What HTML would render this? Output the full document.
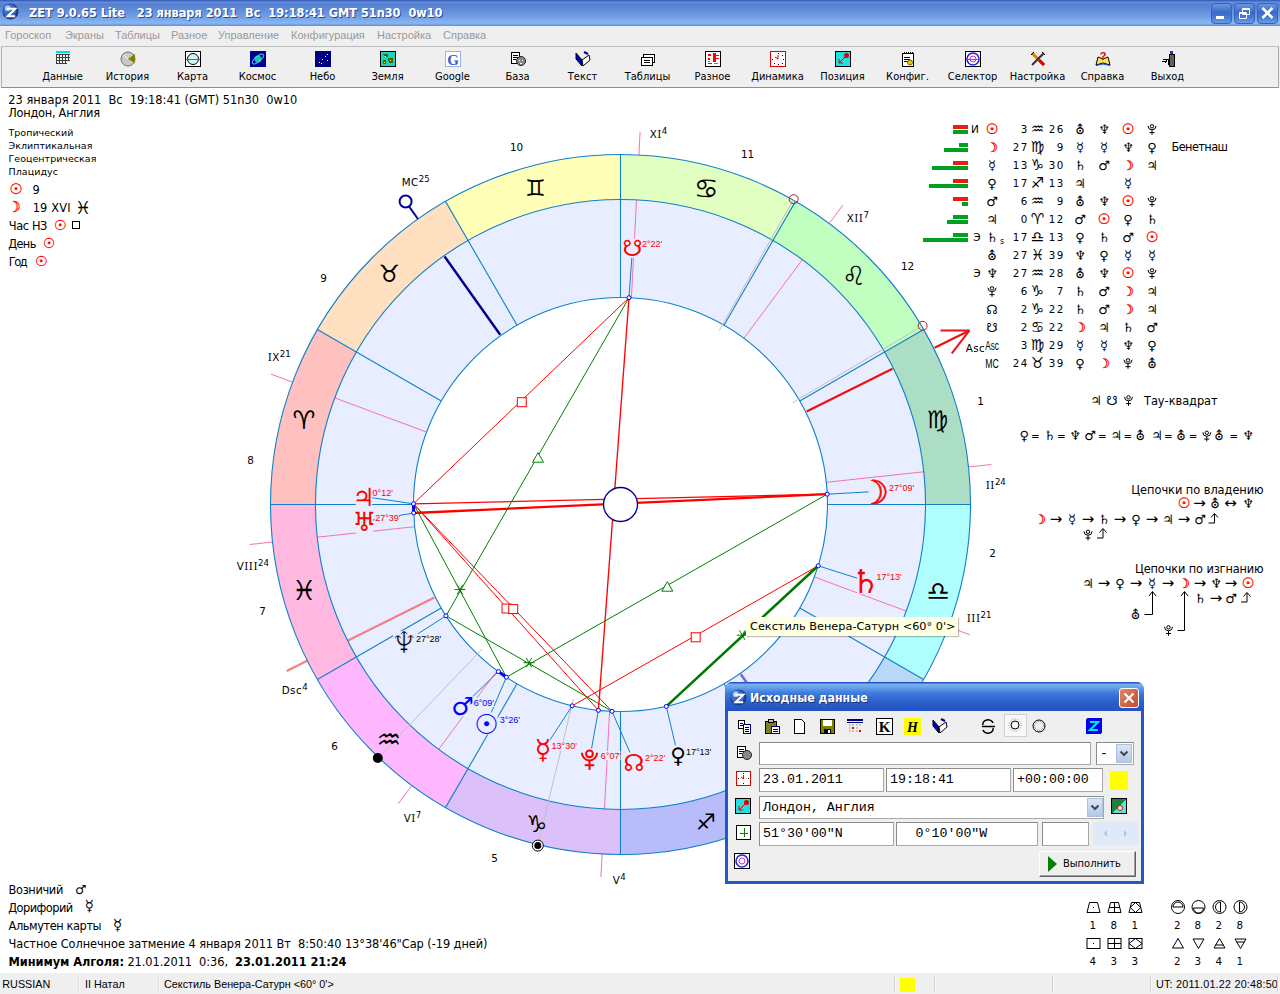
<!DOCTYPE html><html lang="ru"><head><meta charset="utf-8"><title>ZET 9.0.65 Lite</title><style>
html,body{margin:0;padding:0}
body{width:1280px;height:994px;overflow:hidden;background:#fff;position:relative;font-family:"DejaVu Sans","Liberation Sans",sans-serif;font-size:11.4px;color:#000}
.abs{position:absolute;white-space:pre}
#title{position:absolute;left:0;top:0;width:1280px;height:26px;background:linear-gradient(#3a62be 0,#3a62be 1px,#6a92e0 2px,#5580d2 4px,#5e8ad8 9px,#6e9ce4 16px,#8ab6f0 23px,#7eaaea 24px,#5c8ee0 26px)}
#title .t{position:absolute;left:29px;top:5px;color:#fff;font:bold 12.6px "DejaVu Sans Condensed","Liberation Sans",sans-serif;white-space:pre;text-shadow:1px 1px 0 #2a4a90}
.wb{position:absolute;top:3px;width:21px;height:21px;border:1px solid #3c60b4;border-radius:4px;box-sizing:border-box;background:linear-gradient(#6c96e2,#3a6ac8 45%,#4a7ad2 70%,#6a9ae4)}
#menu{position:absolute;left:0;top:26px;width:1280px;height:19px;background:#efefef}
#menu span{position:absolute;top:3px;color:#9a9a9a;font:11px "Liberation Sans",sans-serif;white-space:pre}
#tb{position:absolute;left:1px;top:46px;width:1276px;height:40px;background:#efefef;border:1px solid #a8a8a8;border-top-color:#bcbcbc;border-left-color:#b4b4b4;border-bottom-color:#8e8e8e}
#tbbg{position:absolute;left:0;top:45px;width:1280px;height:43px;background:#efefef}
.tl{position:absolute;top:70px;width:80px;margin-left:-40px;text-align:center;font:11px "DejaVu Sans Condensed","Liberation Sans",sans-serif;white-space:pre}
svg text{white-space:pre}
.pg{font:24px "DejaVu Sans",sans-serif;text-anchor:middle;dominant-baseline:central}
.pl{font:9px "Liberation Sans",sans-serif}
.sg{font:24px "DejaVu Sans",sans-serif;text-anchor:middle;dominant-baseline:central}
.hn{font:10.4px "DejaVu Sans",sans-serif;text-anchor:middle}
.cl{font:10.3px "DejaVu Sans",sans-serif;letter-spacing:0.5px}
.rs{font-family:"DejaVu Serif",serif;font-size:10.4px}
.tg{font:13px "DejaVu Sans",sans-serif;text-anchor:middle}
.ts{font:15px "DejaVu Sans",sans-serif}
.tt{font:10.3px "DejaVu Sans",sans-serif;letter-spacing:1.4px}
.tn{font:12px "Liberation Sans",sans-serif}
.tf{font:10.5px "DejaVu Sans",sans-serif}
.bt{font:11.4px "DejaVu Sans",sans-serif}
.ar{font:15px "DejaVu Sans",sans-serif}
.sm{font:9.5px "DejaVu Sans",sans-serif;letter-spacing:0.1px}
#status{position:absolute;left:0;top:973px;width:1280px;height:21px;background:#efefef}
#status span{position:absolute;top:5px;font:10.8px "Liberation Sans",sans-serif;white-space:pre}
#status i{position:absolute;top:3px;width:1px;height:16px;background:#d2d2d2;border-right:1px solid #fafafa}
#tip{position:absolute;left:745.5px;top:617px;width:212px;height:18.5px;background:#ffffe1;box-sizing:border-box;font:11.3px "DejaVu Sans",sans-serif;line-height:20px;padding-left:4.5px;white-space:pre;box-shadow:1px 1px 1px rgba(0,0,0,.25)}
#dlg{position:absolute;left:725px;top:682px;width:419px;height:202px;box-sizing:border-box;background:#2458c8;border-radius:8px 8px 0 0}
#dlg .ttl{position:absolute;left:0;top:0;width:100%;height:29px;border-radius:7px 7px 0 0;background:linear-gradient(#2454c4 0,#2454c4 1px,#7cb2f0 2px,#6aa4ec 5px,#3f7cdc 11px,#2c62cc 19px,#2352c0 29px)}
#dlg .ttl b{position:absolute;left:25px;top:8.5px;color:#fff;font:bold 12.3px "DejaVu Sans Condensed","Liberation Sans",sans-serif;white-space:pre;text-shadow:1px 1px 0 #183878}
#dlg .body{position:absolute;left:3px;top:29px;width:413px;height:170px;background:#efefef}
.inp{position:absolute;box-sizing:border-box;background:#fff;border:1px solid #a8a8a8;border-top-color:#8c8c8c;border-left-color:#8c8c8c;font:13.3px "Liberation Mono",monospace;line-height:22px;padding-left:3px;white-space:pre;overflow:hidden}
</style></head><body>
<div id="title"><svg class="abs" style="left:2px;top:3px" width="17" height="17" viewBox="0 0 18 18"><circle cx="9" cy="9" r="8.5" fill="#1c3c88"/><circle cx="8" cy="8" r="7" fill="#3e6cc8"/><circle cx="6" cy="5.5" r="3" fill="#a8c8f8"/><path d="M5 6H14L6 14H14" fill="none" stroke="#fff" stroke-width="2.2"/></svg><span class="t">ZET 9.0.65 Lite   23 января 2011  Вс  19:18:41 GMT 51n30  0w10</span><div class="wb" style="left:1211px"><svg width="19" height="19"><rect x="4" y="12" width="8" height="3" fill="#fff"/></svg></div><div class="wb" style="left:1234px"><svg width="19" height="19"><path d="M7.5 4.5h7v6h-7zM7.5 5.5h7M4.5 8.5h7v6h-7zM4.5 9.5h7" fill="none" stroke="#fff" stroke-width="1"/></svg></div><div class="wb" style="left:1257px"><svg width="19" height="19"><path d="M4.5 4L14.5 14M14.5 4L4.5 14" stroke="#fff" stroke-width="2.6"/></svg></div></div>
<div id="menu"><span style="left:5px">Гороскоп</span><span style="left:65px">Экраны</span><span style="left:115px">Таблицы</span><span style="left:171px">Разное</span><span style="left:218px">Управление</span><span style="left:291px">Конфигурация</span><span style="left:377px">Настройка</span><span style="left:443px">Справка</span></div>
<div id="tbbg"></div><div id="tb"></div>
<div class="tl" style="left:62.5px">Данные</div>
<div class="tl" style="left:127.5px">История</div>
<div class="tl" style="left:192.5px">Карта</div>
<div class="tl" style="left:257.5px">Космос</div>
<div class="tl" style="left:322.5px">Небо</div>
<div class="tl" style="left:387.5px">Земля</div>
<div class="tl" style="left:452.5px">Google</div>
<div class="tl" style="left:517.5px">База</div>
<div class="tl" style="left:582.5px">Текст</div>
<div class="tl" style="left:647.5px">Таблицы</div>
<div class="tl" style="left:712.5px">Разное</div>
<div class="tl" style="left:777.5px">Динамика</div>
<div class="tl" style="left:842.5px">Позиция</div>
<div class="tl" style="left:907.5px">Конфиг.</div>
<div class="tl" style="left:972.5px">Селектор</div>
<div class="tl" style="left:1037.5px">Настройка</div>
<div class="tl" style="left:1102.5px">Справка</div>
<div class="tl" style="left:1167.5px">Выход</div>
<svg class="abs" style="left:0;top:0" width="1280" height="994" viewBox="0 0 1280 994"><g transform="translate(55,51)" shape-rendering="crispEdges"><rect x="1" y="0" width="14" height="2" fill="#00e0e0"/><path d="M1 3H15M1 6H15M1 9H15M1 12H12M1 3V13M4 3V13M7 3V13M10 3V13M13 3V10" stroke="#404040" fill="none"/></g>
<g transform="translate(120,51)" shape-rendering="crispEdges"><circle cx="8" cy="8" r="7" fill="#c8c8c8" stroke="#707070" shape-rendering="auto"/><path d="M8 8L15 3V12Z" fill="#808000" shape-rendering="auto"/><path d="M8 8L4 4" stroke="#fff" shape-rendering="auto"/></g>
<g transform="translate(185,51)" shape-rendering="crispEdges"><rect x="0.5" y="0.5" width="15" height="15" fill="#fff" stroke="#000"/><circle cx="8" cy="8" r="5.5" fill="#d0f8f8" stroke="#000" shape-rendering="auto"/><path d="M1 8H15" stroke="#f0f" /></g>
<g transform="translate(250,51)" shape-rendering="crispEdges"><rect width="16" height="16" fill="#000090"/><circle cx="8" cy="8" r="3.5" fill="#20c0a0" shape-rendering="auto"/><ellipse cx="8" cy="8" rx="7" ry="2.5" fill="none" stroke="#40d0ff" transform="rotate(-40 8 8)" shape-rendering="auto"/></g>
<g transform="translate(315,51)" shape-rendering="crispEdges"><rect width="16" height="16" fill="#000080"/><path d="M4 11h1M7 8h1M10 5h1M12 3h1M6 12h1M12 9h1" stroke="#fff"/></g>
<g transform="translate(380,51)" shape-rendering="crispEdges"><rect x="0.5" y="0.5" width="15" height="15" fill="#20d0c0" stroke="#000"/><path d="M3 3h5v3h-3zM8 7h5v5h-4zM3 9h3v4h-3z" fill="#207020"/><path d="M5 5h1M10 9h1M4 11h1" stroke="#ff0"/></g>
<g transform="translate(445,51)" shape-rendering="crispEdges"><rect x="0.5" y="0.5" width="15" height="15" fill="#fff" stroke="#a0b0e0"/><text x="8" y="13.5" text-anchor="middle" style="font:bold 15px 'Liberation Serif',serif" fill="#3060d0" shape-rendering="auto">G</text></g>
<g transform="translate(510,51)" shape-rendering="crispEdges"><path d="M1.5 1.5h8v11h-8z" fill="#fff" stroke="#000"/><path d="M3 4h5M3 6h5M3 8h3" stroke="#000"/><circle cx="11" cy="10" r="4.5" fill="#888" stroke="#222" shape-rendering="auto"/><path d="M9 9h1M12 9h1M10 12h2" stroke="#fff"/></g>
<g transform="translate(575,51)" shape-rendering="crispEdges"><path d="M1 2L7 9V15L1 8Z" fill="#0000c0" stroke="#000" shape-rendering="auto"/><path d="M7 9L14 4L15 9L8 15Z" fill="#fff" stroke="#000" shape-rendering="auto"/><path d="M9 1l4 2" stroke="#000080" stroke-width="2" shape-rendering="auto"/></g>
<g transform="translate(640,51)" shape-rendering="crispEdges"><path d="M3.5 3.5h11v8h-11z" fill="#fff" stroke="#000"/><path d="M1.5 6.5h11v8h-11z" fill="#fff" stroke="#000"/><path d="M4 9h6M4 11h6" stroke="#000"/></g>
<g transform="translate(705,51)" shape-rendering="crispEdges"><rect x="0.5" y="0.5" width="15" height="15" fill="#fff" stroke="#000"/><path d="M3 3h3v2h-3zM3 7h2v2h-2z" fill="#f00"/><path d="M8 2h2v8h-2zM11 4h3M11 7h3M3 12h4" stroke="#f00" fill="#f00"/><path d="M9 12h4M3 10h2" stroke="#0c0"/></g>
<g transform="translate(770,51)" shape-rendering="crispEdges"><rect x="0.5" y="0.5" width="15" height="15" fill="#fff" stroke="#e00000"/><path d="M8 8V4M8 8L5 6" stroke="#e00000" shape-rendering="auto"/><path d="M8 2h1M8 13h1M2 8h1M13 8h1M12 4h1M12 12h1M4 12h1" stroke="#000"/></g>
<g transform="translate(835,51)" shape-rendering="crispEdges"><rect x="0.5" y="0.5" width="15" height="15" fill="#20e0e0" stroke="#000"/><circle cx="11.5" cy="4.5" r="2.5" fill="#e00000" shape-rendering="auto"/><path d="M10 6L4 12M4 8V12H8" stroke="#e00000" fill="none" shape-rendering="auto"/></g>
<g transform="translate(900,51)" shape-rendering="crispEdges"><path d="M2.5 2.5h11v13h-11z" fill="#fff" stroke="#000"/><path d="M4 1v2M6 1v2M8 1v2M10 1v2M12 1v2" stroke="#000"/><path d="M4 6h6M4 8h6M4 10h4" stroke="#000"/><circle cx="10" cy="11.5" r="2.5" fill="#e0d000" stroke="#806000" shape-rendering="auto"/></g>
<g transform="translate(965,51)" shape-rendering="crispEdges"><rect x="0.5" y="0.5" width="15" height="15" fill="#fff" stroke="#000"/><circle cx="8" cy="8" r="6" fill="none" stroke="#2020e0" stroke-width="1.5" shape-rendering="auto"/><circle cx="8" cy="8" r="3" fill="none" stroke="#e020e0" shape-rendering="auto"/><path d="M1 8H15" stroke="#e020e0"/></g>
<g transform="translate(1030,51)" shape-rendering="crispEdges"><path d="M2 2L14 14" stroke="#e08000" stroke-width="3" shape-rendering="auto"/><path d="M14 2L2 14" stroke="#303030" stroke-width="2" shape-rendering="auto"/><path d="M9 9L14 14" stroke="#e00000" stroke-width="3" shape-rendering="auto"/><path d="M1 4l3-3M15 4l-3-3" stroke="#000" shape-rendering="auto"/></g>
<g transform="translate(1095,51)" shape-rendering="crispEdges"><path d="M1 14L3 6L8 8L13 6L15 14L8 12Z" fill="#ffe060" stroke="#000" shape-rendering="auto"/><path d="M1 14.5L8 13L15 14.5" stroke="#2040e0" fill="none" shape-rendering="auto"/><text x="8" y="9" text-anchor="middle" style="font:bold 11px 'Liberation Sans',sans-serif" fill="#e00000" shape-rendering="auto">?</text></g>
<g transform="translate(1160,51)" shape-rendering="crispEdges"><rect x="9" y="3" width="5" height="12" fill="#606060" stroke="#000"/><rect x="10" y="0" width="3" height="3" fill="#3030c0"/><path d="M3 8h5M2 10h3M5 12l3-4l1 6" stroke="#000" fill="none"/></g>
<circle cx="620.5" cy="504.5" r="350" fill="#e8eeff"/>
<line x1="631.4" y1="297.8" x2="640.1" y2="132.0" stroke="#f870b0" stroke-width="1" />
<line x1="743.9" y1="338.3" x2="842.9" y2="205.1" stroke="#f870b0" stroke-width="1" />
<line x1="826.3" y1="482.3" x2="991.3" y2="464.5" stroke="#f870b0" stroke-width="1" />
<line x1="814.4" y1="576.9" x2="970.0" y2="634.9" stroke="#f870b0" stroke-width="1" />
<line x1="609.6" y1="711.2" x2="600.9" y2="877.0" stroke="#f870b0" stroke-width="1" />
<line x1="497.1" y1="670.7" x2="398.1" y2="803.9" stroke="#f870b0" stroke-width="1" />
<line x1="414.7" y1="526.7" x2="249.7" y2="544.5" stroke="#f870b0" stroke-width="1" />
<line x1="426.6" y1="432.1" x2="271.0" y2="374.1" stroke="#f870b0" stroke-width="1" />
<line x1="434.4" y1="597.4" x2="286.7" y2="671.0" stroke="#f48080" stroke-width="2.2" />
<path d="M270.5 504.5 A350 350 0 0 1 317.4 329.5 L356.4 352.0 A305 305 0 0 0 315.5 504.5 Z" fill="#ffc0c0"/>
<path d="M317.4 329.5 A350 350 0 0 1 445.5 201.4 L468.0 240.4 A305 305 0 0 0 356.4 352.0 Z" fill="#ffe0c0"/>
<path d="M445.5 201.4 A350 350 0 0 1 620.5 154.5 L620.5 199.5 A305 305 0 0 0 468.0 240.4 Z" fill="#ffffb8"/>
<path d="M620.5 154.5 A350 350 0 0 1 795.5 201.4 L773.0 240.4 A305 305 0 0 0 620.5 199.5 Z" fill="#e0ffc0"/>
<path d="M795.5 201.4 A350 350 0 0 1 923.6 329.5 L884.6 352.0 A305 305 0 0 0 773.0 240.4 Z" fill="#c0ffc0"/>
<path d="M923.6 329.5 A350 350 0 0 1 970.5 504.5 L925.5 504.5 A305 305 0 0 0 884.6 352.0 Z" fill="#acdec6"/>
<path d="M970.5 504.5 A350 350 0 0 1 923.6 679.5 L884.6 657.0 A305 305 0 0 0 925.5 504.5 Z" fill="#b0ffff"/>
<path d="M923.6 679.5 A350 350 0 0 1 795.5 807.6 L773.0 768.6 A305 305 0 0 0 884.6 657.0 Z" fill="#b8d8f8"/>
<path d="M795.5 807.6 A350 350 0 0 1 620.5 854.5 L620.5 809.5 A305 305 0 0 0 773.0 768.6 Z" fill="#b8bcfa"/>
<path d="M620.5 854.5 A350 350 0 0 1 445.5 807.6 L468.0 768.6 A305 305 0 0 0 620.5 809.5 Z" fill="#dcc0fa"/>
<path d="M445.5 807.6 A350 350 0 0 1 317.4 679.5 L356.4 657.0 A305 305 0 0 0 468.0 768.6 Z" fill="#ffb8ff"/>
<path d="M317.4 679.5 A350 350 0 0 1 270.5 504.5 L315.5 504.5 A305 305 0 0 0 356.4 657.0 Z" fill="#ffb8e0"/>
<circle cx="620.5" cy="504.5" r="207" fill="#fff"/>
<line x1="413.5" y1="504.5" x2="270.5" y2="504.5" stroke="#1080c8" stroke-width="1.1" />
<line x1="441.2" y1="401.0" x2="317.4" y2="329.5" stroke="#1080c8" stroke-width="1.1" />
<line x1="517.0" y1="325.2" x2="445.5" y2="201.4" stroke="#1080c8" stroke-width="1.1" />
<line x1="620.5" y1="297.5" x2="620.5" y2="154.5" stroke="#1080c8" stroke-width="1.1" />
<line x1="724.0" y1="325.2" x2="795.5" y2="201.4" stroke="#1080c8" stroke-width="1.1" />
<line x1="799.8" y1="401.0" x2="923.6" y2="329.5" stroke="#1080c8" stroke-width="1.1" />
<line x1="827.5" y1="504.5" x2="970.5" y2="504.5" stroke="#1080c8" stroke-width="1.1" />
<line x1="799.8" y1="608.0" x2="923.6" y2="679.5" stroke="#1080c8" stroke-width="1.1" />
<line x1="724.0" y1="683.8" x2="795.5" y2="807.6" stroke="#1080c8" stroke-width="1.1" />
<line x1="620.5" y1="711.5" x2="620.5" y2="854.5" stroke="#1080c8" stroke-width="1.1" />
<line x1="517.0" y1="683.8" x2="445.5" y2="807.6" stroke="#1080c8" stroke-width="1.1" />
<line x1="441.2" y1="608.0" x2="317.4" y2="679.5" stroke="#1080c8" stroke-width="1.1" />
<circle cx="620.5" cy="504.5" r="350" fill="none" stroke="#1080c8" stroke-width="1.1"/>
<circle cx="620.5" cy="504.5" r="305" fill="none" stroke="#1080c8" stroke-width="1.1"/>
<circle cx="620.5" cy="504.5" r="207" fill="none" stroke="#1080c8" stroke-width="1.1"/>
<line x1="719.2" y1="330.5" x2="793.2" y2="200.1" stroke="#c0c0c0" stroke-width="1" />
<line x1="792.6" y1="402.7" x2="921.8" y2="326.3" stroke="#c0c0c0" stroke-width="1" />
<line x1="482.2" y1="649.0" x2="378.5" y2="757.3" stroke="#c0c0c0" stroke-width="1" />
<line x1="573.4" y1="698.9" x2="538.0" y2="844.6" stroke="#c0c0c0" stroke-width="1" />
<line x1="740.8" y1="674.2" x2="796.4" y2="752.5" stroke="#7468e0" stroke-width="2.5" />
<line x1="500.2" y1="334.8" x2="444.6" y2="256.5" stroke="#000090" stroke-width="2.4" />
<line x1="418.0" y1="219.0" x2="408.7" y2="206.0" stroke="#0000a0" stroke-width="2" />
<circle cx="405.6" cy="201.5" r="6" fill="#fff" stroke="#0000a0" stroke-width="2"/>
<line x1="806.6" y1="411.6" x2="892.5" y2="368.8" stroke="#f01010" stroke-width="2.2" />
<line x1="934.6" y1="347.8" x2="969.5" y2="330.4" stroke="#f01010" stroke-width="2.2" />
<line x1="969.5" y1="330.4" x2="951.8" y2="353.4" stroke="#f01010" stroke-width="2" />
<line x1="969.5" y1="330.4" x2="940.5" y2="330.6" stroke="#f01010" stroke-width="2" />
<circle cx="793.7" cy="199.2" r="4.5" fill="none" stroke="#b02020" stroke-width="1"/>
<circle cx="922.6" cy="325.8" r="4.5" fill="none" stroke="#b02020" stroke-width="1"/>
<circle cx="377.8" cy="758.0" r="5" fill="#000"/>
<circle cx="537.8" cy="845.6" r="5.5" fill="#fff" stroke="#000" stroke-width="1"/>
<circle cx="537.8" cy="845.6" r="3.5" fill="#000"/>
<text x="292.5" y="428.7" style="font:25.5px 'DejaVu Sans',sans-serif" fill="#000" >♈︎</text>
<text x="378.5" y="281.7" style="font:24.1px 'DejaVu Sans',sans-serif" fill="#000" >♉︎</text>
<text x="525.2" y="195.7" style="font:23.0px 'DejaVu Sans',sans-serif" fill="#000" >♊︎</text>
<text x="694.1" y="198.2" style="font:27.3px 'DejaVu Sans',sans-serif" fill="#000" >♋︎</text>
<text x="841.9" y="284.5" style="font:26.5px 'DejaVu Sans',sans-serif" fill="#000" >♌︎</text>
<text x="926.8" y="427.7" style="font:23.9px 'DejaVu Sans',sans-serif" fill="#000" >♍︎</text>
<text x="926.4" y="599.6" style="font:26.1px 'DejaVu Sans',sans-serif" fill="#000" >♎︎</text>
<text x="842.1" y="743.9" style="font:23.2px 'DejaVu Sans',sans-serif" fill="#000" >♏︎</text>
<text x="695.9" y="830.4" style="font:22.5px 'DejaVu Sans',sans-serif" fill="#000" >♐︎</text>
<text x="526.3" y="831.9" style="font:23.4px 'DejaVu Sans',sans-serif" fill="#000" >♑︎</text>
<text x="376.4" y="749.2" style="font:27.5px 'DejaVu Sans',sans-serif" fill="#000" >♒︎</text>
<text x="291.8" y="600.2" style="font:27.4px 'DejaVu Sans',sans-serif" fill="#000" >♓︎</text>
<line x1="413.5" y1="503.8" x2="827.2" y2="494.2" stroke="#ff0000" stroke-width="1.2" />
<line x1="413.7" y1="513.0" x2="827.2" y2="494.2" stroke="#ff0000" stroke-width="2.3" />
<line x1="629.0" y1="297.7" x2="413.5" y2="503.8" stroke="#ff0000" stroke-width="1" />
<line x1="629.0" y1="297.7" x2="598.4" y2="710.3" stroke="#ff0000" stroke-width="1.35" />
<line x1="413.5" y1="503.8" x2="598.4" y2="710.3" stroke="#ff0000" stroke-width="1" />
<line x1="413.5" y1="503.8" x2="612.0" y2="711.3" stroke="#ff0000" stroke-width="1" />
<line x1="818.2" y1="565.8" x2="572.2" y2="705.8" stroke="#ff0000" stroke-width="1" />
<line x1="629.0" y1="297.7" x2="446.0" y2="615.8" stroke="#008000" stroke-width="1" />
<line x1="413.5" y1="503.8" x2="506.4" y2="677.2" stroke="#008000" stroke-width="1" />
<line x1="446.0" y1="615.8" x2="612.0" y2="711.3" stroke="#008000" stroke-width="1" />
<line x1="827.2" y1="494.2" x2="506.4" y2="677.2" stroke="#008000" stroke-width="1" />
<line x1="666.3" y1="706.4" x2="818.2" y2="565.8" stroke="#007800" stroke-width="2.6" />
<rect x="517.3" y="397.7" width="9" height="9" fill="#fff" stroke="#ff0000" stroke-width="1"/>
<rect x="502.0" y="604.0" width="9" height="9" fill="#fff" stroke="#ff0000" stroke-width="1"/>
<rect x="508.7" y="604.6" width="9" height="9" fill="#fff" stroke="#ff0000" stroke-width="1"/>
<rect x="691.2" y="632.8" width="9" height="9" fill="#fff" stroke="#ff0000" stroke-width="1"/>
<path d="M538.0 452.7 L543.5 462.2 L532.5 462.2 Z" fill="#fff" stroke="#008000" stroke-width="1"/>
<line x1="454.5" y1="589.6" x2="465.5" y2="589.6" stroke="#008000" stroke-width="1"/><line x1="457.2" y1="584.8" x2="462.7" y2="594.4" stroke="#008000" stroke-width="1"/><line x1="462.7" y1="584.8" x2="457.2" y2="594.4" stroke="#008000" stroke-width="1"/>
<line x1="523.5" y1="662.7" x2="534.5" y2="662.7" stroke="#008000" stroke-width="1"/><line x1="526.2" y1="657.9" x2="531.7" y2="667.4" stroke="#008000" stroke-width="1"/><line x1="531.7" y1="657.9" x2="526.2" y2="667.4" stroke="#008000" stroke-width="1"/>
<path d="M667.3 581.7 L672.8 591.2 L661.8 591.2 Z" fill="#fff" stroke="#008000" stroke-width="1"/>
<line x1="736.8" y1="635.2" x2="747.8" y2="635.2" stroke="#008000" stroke-width="1"/><line x1="739.5" y1="630.4" x2="745.0" y2="639.9" stroke="#008000" stroke-width="1"/><line x1="745.0" y1="630.4" x2="739.5" y2="639.9" stroke="#008000" stroke-width="1"/>
<line x1="413.5" y1="503.8" x2="413.7" y2="513.0" stroke="#0000ff" stroke-width="3" />
<line x1="506.4" y1="677.2" x2="498.4" y2="671.6" stroke="#0000ff" stroke-width="3" />
<circle cx="620.5" cy="504.5" r="17" fill="#fff" stroke="#000080" stroke-width="1.3"/>
<line x1="413.5" y1="503.8" x2="363.9" y2="496.5" stroke="#1080c8" stroke-width="1" />
<line x1="413.7" y1="513.0" x2="364.4" y2="521.5" stroke="#1080c8" stroke-width="1" />
<line x1="446.0" y1="615.8" x2="404.3" y2="642.5" stroke="#1080c8" stroke-width="1" />
<line x1="498.4" y1="671.6" x2="462.7" y2="706.4" stroke="#1080c8" stroke-width="1" />
<line x1="506.4" y1="677.2" x2="486.6" y2="723.5" stroke="#1080c8" stroke-width="1" />
<line x1="572.2" y1="705.8" x2="543.2" y2="750.4" stroke="#1080c8" stroke-width="1" />
<line x1="598.4" y1="710.3" x2="589.5" y2="760.0" stroke="#1080c8" stroke-width="1" />
<line x1="612.0" y1="711.3" x2="634.0" y2="761.9" stroke="#1080c8" stroke-width="1" />
<line x1="666.3" y1="706.4" x2="678.0" y2="756.0" stroke="#1080c8" stroke-width="1" />
<line x1="827.2" y1="494.2" x2="878.7" y2="491.3" stroke="#1080c8" stroke-width="1" />
<line x1="818.2" y1="565.8" x2="865.5" y2="580.8" stroke="#1080c8" stroke-width="1" />
<line x1="629.0" y1="297.7" x2="632.5" y2="248.3" stroke="#1080c8" stroke-width="1" />
<rect x="355.9" y="486.3" width="16.0" height="20.3" fill="#e8eeff"/>
<rect x="372.1" y="487.7" width="19.8" height="9.6" fill="#e8eeff"/>
<rect x="355.9" y="509.3" width="17.0" height="24.3" fill="#e8eeff"/>
<rect x="374.7" y="512.5" width="25.3" height="9.6" fill="#e8eeff"/>
<rect x="393.1" y="631.1" width="22.4" height="22.7" fill="#e8eeff"/>
<rect x="415.4" y="633.7" width="26.4" height="9.8" fill="#e8eeff"/>
<rect x="452.2" y="696.2" width="21.1" height="20.3" fill="#e8eeff"/>
<rect x="473.2" y="697.8" width="20.7" height="9.3" fill="#e8eeff"/>
<rect x="475.5" y="712.4" width="22.1" height="22.1" fill="#e8eeff"/>
<rect x="499.2" y="715.1" width="21.4" height="9.2" fill="#e8eeff"/>
<rect x="536.2" y="738.2" width="14.0" height="24.4" fill="#e8eeff"/>
<rect x="551.1" y="740.8" width="25.2" height="9.7" fill="#e8eeff"/>
<rect x="579.5" y="748.4" width="19.9" height="23.1" fill="#e8eeff"/>
<rect x="600.3" y="751.0" width="20.2" height="9.2" fill="#e8eeff"/>
<rect x="624.0" y="752.3" width="20.0" height="19.2" fill="#e8eeff"/>
<rect x="644.5" y="752.9" width="19.8" height="9.6" fill="#e8eeff"/>
<rect x="671.3" y="745.2" width="13.3" height="21.5" fill="#e8eeff"/>
<rect x="685.5" y="746.6" width="26.0" height="9.7" fill="#e8eeff"/>
<rect x="868.6" y="480.1" width="20.1" height="22.4" fill="#e8eeff"/>
<rect x="888.5" y="482.7" width="26.2" height="9.8" fill="#e8eeff"/>
<rect x="857.0" y="567.7" width="17.1" height="26.1" fill="#e8eeff"/>
<rect x="875.9" y="572.0" width="25.6" height="9.5" fill="#e8eeff"/>
<rect x="623.4" y="238.7" width="18.2" height="19.2" fill="#e8eeff"/>
<rect x="641.5" y="239.0" width="22.4" height="9.5" fill="#e8eeff"/>
<circle cx="413.5" cy="503.8" r="2" fill="#fff" stroke="#0000ff" stroke-width="1"/>
<text x="352.6" y="505.6" style="font:25.0px 'DejaVu Sans',sans-serif" fill="#ff0000" >♃︎</text>
<text x="372.6" y="495.8" class="pl" fill="#ff0000">0°12'</text>
<circle cx="413.7" cy="513.0" r="2" fill="#fff" stroke="#0000ff" stroke-width="1"/>
<text x="352.6" y="531.1" style="font:26.6px 'DejaVu Sans',sans-serif" fill="#ff0000" >♅︎</text>
<text x="375.2" y="520.6" class="pl" fill="#ff0000">27°39'</text>
<circle cx="446.0" cy="615.8" r="2" fill="#fff" stroke="#0000ff" stroke-width="1"/>
<text x="390.8" y="653.4" style="font:30.1px 'DejaVu Sans',sans-serif" fill="#000000" stroke="#e8eeff" stroke-width="0.7">♆︎</text>
<text x="415.9" y="642.0" class="pl" fill="#000000">27°28'</text>
<circle cx="498.4" cy="671.6" r="2" fill="#fff" stroke="#0000ff" stroke-width="1"/>
<text x="451.2" y="715.3" style="font:25.2px 'DejaVu Sans',sans-serif" fill="#0000ff" >♂︎</text>
<text x="473.7" y="705.6" class="pl" fill="#0000ff">6°09'</text>
<circle cx="506.4" cy="677.2" r="2" fill="#fff" stroke="#0000ff" stroke-width="1"/>
<text x="474.3" y="733.5" style="font:27.5px 'DejaVu Sans',sans-serif" fill="#0000ff" >☉︎</text>
<text x="499.7" y="722.8" class="pl" fill="#0000ff">3°26'</text>
<circle cx="572.2" cy="705.8" r="2" fill="#fff" stroke="#0000ff" stroke-width="1"/>
<text x="534.8" y="758.9" style="font:27.1px 'DejaVu Sans',sans-serif" fill="#ff0000" >☿︎</text>
<text x="551.6" y="749.0" class="pl" fill="#ff0000">13°30'</text>
<circle cx="598.4" cy="710.3" r="2" fill="#fff" stroke="#0000ff" stroke-width="1"/>
<g fill="none" stroke="#ff0000" stroke-width="2" stroke-linecap="butt"><circle cx="589.5" cy="753.8" r="3.4"/><path d="M581.9 752.8 A7.6 7.6 0 0 0 597.1 752.8"/><line x1="589.5" y1="760.4" x2="589.5" y2="769.9"/><line x1="584.7" y1="765.2" x2="594.2" y2="765.2"/></g>
<text x="600.8" y="758.8" class="pl" fill="#ff0000">6°07'</text>
<circle cx="612.0" cy="711.3" r="2" fill="#fff" stroke="#0000ff" stroke-width="1"/>
<text x="623.6" y="770.5" style="font:23.5px 'DejaVu Sans',sans-serif" fill="#ff0000" >☊︎</text>
<text x="645.0" y="761.0" class="pl" fill="#ff0000">2°22'</text>
<circle cx="666.3" cy="706.4" r="2" fill="#fff" stroke="#0000ff" stroke-width="1"/>
<text x="670.2" y="762.5" style="font:21.4px 'DejaVu Sans',sans-serif" fill="#000000" >♀︎</text>
<text x="686.0" y="754.8" class="pl" fill="#000000">17°13'</text>
<circle cx="827.2" cy="494.2" r="2" fill="#fff" stroke="#0000ff" stroke-width="1"/>
<text x="859.0" y="503.5" style="font:33.5px 'DejaVu Sans',sans-serif" fill="#ff0000" stroke="#ff0000" stroke-width="0.6">☽︎</text>
<text x="889.0" y="491.0" class="pl" fill="#ff0000">27°09'</text>
<circle cx="818.2" cy="565.8" r="2" fill="#fff" stroke="#0000ff" stroke-width="1"/>
<text x="850.7" y="592.8" style="font:32.9px 'DejaVu Sans',sans-serif" fill="#ff0000" >♄︎</text>
<text x="876.4" y="580.0" class="pl" fill="#ff0000">17°13'</text>
<circle cx="629.0" cy="297.7" r="2" fill="#fff" stroke="#0000ff" stroke-width="1"/>
<text x="622.5" y="256.4" style="font:22.4px 'DejaVu Sans',sans-serif" fill="#ff0000" >☋︎</text>
<text x="642.0" y="247.0" class="pl" fill="#ff0000">2°22'</text>
<text x="980.5" y="405.2" class="hn">1</text>
<text x="992.5" y="557.2" class="hn">2</text>
<text x="494.5" y="862.2" class="hn">5</text>
<text x="334.5" y="750.2" class="hn">6</text>
<text x="262.5" y="615.2" class="hn">7</text>
<text x="250.5" y="464.2" class="hn">8</text>
<text x="323.5" y="282.2" class="hn">9</text>
<text x="516.5" y="151.2" class="hn">10</text>
<text x="747.5" y="158.2" class="hn">11</text>
<text x="907.5" y="270.2" class="hn">12</text>
<text x="401.7" y="185.9" class="cl">MC<tspan dy="-4.2" style="font-size:8.6px;letter-spacing:0">25</tspan></text>
<text x="649.7" y="137.9" class="cl">X<tspan class="rs">I</tspan><tspan dy="-4.2" style="font-size:8.6px;letter-spacing:0">4</tspan></text>
<text x="846.7" y="221.9" class="cl">X<tspan class="rs">II</tspan><tspan dy="-4.2" style="font-size:8.6px;letter-spacing:0">7</tspan></text>
<text x="965.7" y="352.4" class="cl">Asc<tspan dy="-4.2" style="font-size:8.6px;letter-spacing:0"></tspan></text>
<text x="985.7" y="488.9" class="cl"><tspan class="rs">II</tspan><tspan dy="-4.2" style="font-size:8.6px;letter-spacing:0">24</tspan></text>
<text x="966.7" y="621.9" class="cl"><tspan class="rs">III</tspan><tspan dy="-4.2" style="font-size:8.6px;letter-spacing:0">21</tspan></text>
<text x="612.7" y="883.9" class="cl">V<tspan dy="-4.2" style="font-size:8.6px;letter-spacing:0">4</tspan></text>
<text x="403.7" y="821.9" class="cl">V<tspan class="rs">I</tspan><tspan dy="-4.2" style="font-size:8.6px;letter-spacing:0">7</tspan></text>
<text x="281.7" y="693.9" class="cl">Dsc<tspan dy="-4.2" style="font-size:8.6px;letter-spacing:0">4</tspan></text>
<text x="236.7" y="569.9" class="cl">V<tspan class="rs">III</tspan><tspan dy="-4.2" style="font-size:8.6px;letter-spacing:0">24</tspan></text>
<text x="267.7" y="360.9" class="cl"><tspan class="rs">I</tspan>X<tspan dy="-4.2" style="font-size:8.6px;letter-spacing:0">21</tspan></text>
<text x="992.0" y="133.9" class="tg" fill="#ff0000" stroke="#f00" stroke-width="0.35" style="font-size:14.2px">☉︎</text>
<text x="1028.6" y="133.0" class="tt" text-anchor="end">3</text>
<text x="1037.5" y="133.5" class="ts" text-anchor="middle">♒︎</text>
<text x="1064.6" y="133.0" class="tt" text-anchor="end">26</text>
<text x="1080.0" y="133.5" class="tg" fill="#000">⛢︎</text>
<text x="1104.0" y="133.5" class="tg" fill="#000">♆︎</text>
<text x="1128.0" y="133.9" class="tg" fill="#ff0000" stroke="#f00" stroke-width="0.35" style="font-size:14.2px">☉︎</text>
<g fill="none" stroke="#000" stroke-width="1"><circle cx="1152.0" cy="126.3" r="1.7"/><path d="M1148.0 125.8 A4.0 4.0 0 0 0 1156.0 125.8"/><path d="M1152.0 129.8 V134.8 M1149.5 132.6 H1154.5"/></g>
<text x="992.0" y="151.5" class="tg" fill="#ff0000" stroke="#f00" stroke-width="0.35">☽︎</text>
<text x="1028.6" y="151.0" class="tt" text-anchor="end">27</text>
<text x="1037.5" y="151.5" class="ts" text-anchor="middle">♍︎</text>
<text x="1064.6" y="151.0" class="tt" text-anchor="end">9</text>
<text x="1080.0" y="151.5" class="tg" fill="#000">☿︎</text>
<text x="1104.0" y="151.5" class="tg" fill="#000">☿︎</text>
<text x="1128.0" y="151.5" class="tg" fill="#000">♆︎</text>
<text x="1152.0" y="151.5" class="tg" fill="#000">♀︎</text>
<text x="992.0" y="169.5" class="tg" fill="#000">☿︎</text>
<text x="1028.6" y="169.0" class="tt" text-anchor="end">13</text>
<text x="1037.5" y="169.5" class="ts" text-anchor="middle">♑︎</text>
<text x="1064.6" y="169.0" class="tt" text-anchor="end">30</text>
<text x="1080.0" y="169.5" class="tg" fill="#000">♄︎</text>
<text x="1104.0" y="169.5" class="tg" fill="#000">♂︎</text>
<text x="1128.0" y="169.5" class="tg" fill="#ff0000" stroke="#f00" stroke-width="0.35">☽︎</text>
<text x="1152.0" y="169.5" class="tg" fill="#000">♃︎</text>
<text x="992.0" y="187.5" class="tg" fill="#000">♀︎</text>
<text x="1028.6" y="187.0" class="tt" text-anchor="end">17</text>
<text x="1037.5" y="187.5" class="ts" text-anchor="middle">♐︎</text>
<text x="1064.6" y="187.0" class="tt" text-anchor="end">13</text>
<text x="1080.0" y="187.5" class="tg" fill="#000">♃︎</text>
<text x="1128.0" y="187.5" class="tg" fill="#000">☿︎</text>
<text x="992.0" y="205.5" class="tg" fill="#000">♂︎</text>
<text x="1028.6" y="205.0" class="tt" text-anchor="end">6</text>
<text x="1037.5" y="205.5" class="ts" text-anchor="middle">♒︎</text>
<text x="1064.6" y="205.0" class="tt" text-anchor="end">9</text>
<text x="1080.0" y="205.5" class="tg" fill="#000">⛢︎</text>
<text x="1104.0" y="205.5" class="tg" fill="#000">♆︎</text>
<text x="1128.0" y="205.9" class="tg" fill="#ff0000" stroke="#f00" stroke-width="0.35" style="font-size:14.2px">☉︎</text>
<g fill="none" stroke="#000" stroke-width="1"><circle cx="1152.0" cy="198.3" r="1.7"/><path d="M1148.0 197.8 A4.0 4.0 0 0 0 1156.0 197.8"/><path d="M1152.0 201.8 V206.8 M1149.5 204.6 H1154.5"/></g>
<text x="992.0" y="223.5" class="tg" fill="#000">♃︎</text>
<text x="1028.6" y="223.0" class="tt" text-anchor="end">0</text>
<text x="1037.5" y="223.5" class="ts" text-anchor="middle">♈︎</text>
<text x="1064.6" y="223.0" class="tt" text-anchor="end">12</text>
<text x="1080.0" y="223.5" class="tg" fill="#000">♂︎</text>
<text x="1104.0" y="223.9" class="tg" fill="#ff0000" stroke="#f00" stroke-width="0.35" style="font-size:14.2px">☉︎</text>
<text x="1128.0" y="223.5" class="tg" fill="#000">♀︎</text>
<text x="1152.0" y="223.5" class="tg" fill="#000">♄︎</text>
<text x="992.0" y="241.5" class="tg" fill="#000">♄︎</text>
<text x="1028.6" y="241.0" class="tt" text-anchor="end">17</text>
<text x="1037.5" y="241.5" class="ts" text-anchor="middle">♎︎</text>
<text x="1064.6" y="241.0" class="tt" text-anchor="end">13</text>
<text x="1080.0" y="241.5" class="tg" fill="#000">♀︎</text>
<text x="1104.0" y="241.5" class="tg" fill="#000">♄︎</text>
<text x="1128.0" y="241.5" class="tg" fill="#000">♂︎</text>
<text x="1152.0" y="241.9" class="tg" fill="#ff0000" stroke="#f00" stroke-width="0.35" style="font-size:14.2px">☉︎</text>
<text x="992.0" y="259.5" class="tg" fill="#000">⛢︎</text>
<text x="1028.6" y="259.0" class="tt" text-anchor="end">27</text>
<text x="1037.5" y="259.5" class="ts" text-anchor="middle">♓︎</text>
<text x="1064.6" y="259.0" class="tt" text-anchor="end">39</text>
<text x="1080.0" y="259.5" class="tg" fill="#000">♆︎</text>
<text x="1104.0" y="259.5" class="tg" fill="#000">♀︎</text>
<text x="1128.0" y="259.5" class="tg" fill="#000">☿︎</text>
<text x="1152.0" y="259.5" class="tg" fill="#000">☿︎</text>
<text x="992.0" y="277.5" class="tg" fill="#000">♆︎</text>
<text x="1028.6" y="277.0" class="tt" text-anchor="end">27</text>
<text x="1037.5" y="277.5" class="ts" text-anchor="middle">♒︎</text>
<text x="1064.6" y="277.0" class="tt" text-anchor="end">28</text>
<text x="1080.0" y="277.5" class="tg" fill="#000">⛢︎</text>
<text x="1104.0" y="277.5" class="tg" fill="#000">♆︎</text>
<text x="1128.0" y="277.9" class="tg" fill="#ff0000" stroke="#f00" stroke-width="0.35" style="font-size:14.2px">☉︎</text>
<g fill="none" stroke="#000" stroke-width="1"><circle cx="1152.0" cy="270.3" r="1.7"/><path d="M1148.0 269.8 A4.0 4.0 0 0 0 1156.0 269.8"/><path d="M1152.0 273.8 V278.8 M1149.5 276.6 H1154.5"/></g>
<g fill="none" stroke="#000" stroke-width="1"><circle cx="992.0" cy="288.3" r="1.7"/><path d="M988.0 287.8 A4.0 4.0 0 0 0 996.0 287.8"/><path d="M992.0 291.8 V296.8 M989.5 294.6 H994.5"/></g>
<text x="1028.6" y="295.0" class="tt" text-anchor="end">6</text>
<text x="1037.5" y="295.5" class="ts" text-anchor="middle">♑︎</text>
<text x="1064.6" y="295.0" class="tt" text-anchor="end">7</text>
<text x="1080.0" y="295.5" class="tg" fill="#000">♄︎</text>
<text x="1104.0" y="295.5" class="tg" fill="#000">♂︎</text>
<text x="1128.0" y="295.5" class="tg" fill="#ff0000" stroke="#f00" stroke-width="0.35">☽︎</text>
<text x="1152.0" y="295.5" class="tg" fill="#000">♃︎</text>
<text x="992.0" y="313.5" class="tg" fill="#000">☊︎</text>
<text x="1028.6" y="313.0" class="tt" text-anchor="end">2</text>
<text x="1037.5" y="313.5" class="ts" text-anchor="middle">♑︎</text>
<text x="1064.6" y="313.0" class="tt" text-anchor="end">22</text>
<text x="1080.0" y="313.5" class="tg" fill="#000">♄︎</text>
<text x="1104.0" y="313.5" class="tg" fill="#000">♂︎</text>
<text x="1128.0" y="313.5" class="tg" fill="#ff0000" stroke="#f00" stroke-width="0.35">☽︎</text>
<text x="1152.0" y="313.5" class="tg" fill="#000">♃︎</text>
<text x="992.0" y="331.5" class="tg" fill="#000">☋︎</text>
<text x="1028.6" y="331.0" class="tt" text-anchor="end">2</text>
<text x="1037.5" y="331.5" class="ts" text-anchor="middle">♋︎</text>
<text x="1064.6" y="331.0" class="tt" text-anchor="end">22</text>
<text x="1080.0" y="331.5" class="tg" fill="#ff0000" stroke="#f00" stroke-width="0.35">☽︎</text>
<text x="1104.0" y="331.5" class="tg" fill="#000">♃︎</text>
<text x="1128.0" y="331.5" class="tg" fill="#000">♄︎</text>
<text x="1152.0" y="331.5" class="tg" fill="#000">♂︎</text>
<text x="992" y="349.5" class="tn" text-anchor="middle" textLength="13.5" lengthAdjust="spacingAndGlyphs">Asc</text>
<text x="1028.6" y="349.0" class="tt" text-anchor="end">3</text>
<text x="1037.5" y="349.5" class="ts" text-anchor="middle">♍︎</text>
<text x="1064.6" y="349.0" class="tt" text-anchor="end">29</text>
<text x="1080.0" y="349.5" class="tg" fill="#000">☿︎</text>
<text x="1104.0" y="349.5" class="tg" fill="#000">☿︎</text>
<text x="1128.0" y="349.5" class="tg" fill="#000">♆︎</text>
<text x="1152.0" y="349.5" class="tg" fill="#000">♀︎</text>
<text x="992" y="367.5" class="tn" text-anchor="middle" textLength="13.5" lengthAdjust="spacingAndGlyphs">MC</text>
<text x="1028.6" y="367.0" class="tt" text-anchor="end">24</text>
<text x="1037.5" y="367.5" class="ts" text-anchor="middle">♉︎</text>
<text x="1064.6" y="367.0" class="tt" text-anchor="end">39</text>
<text x="1080.0" y="367.5" class="tg" fill="#000">♀︎</text>
<text x="1104.0" y="367.5" class="tg" fill="#ff0000" stroke="#f00" stroke-width="0.35">☽︎</text>
<g fill="none" stroke="#000" stroke-width="1"><circle cx="1128.0" cy="360.3" r="1.7"/><path d="M1124.0 359.8 A4.0 4.0 0 0 0 1132.0 359.8"/><path d="M1128.0 363.8 V368.8 M1125.5 366.6 H1130.5"/></g>
<text x="1152.0" y="367.5" class="tg" fill="#000">⛢︎</text>
<text x="975" y="133" class="tf" text-anchor="middle">И</text>
<text x="977" y="241" class="tf" text-anchor="middle">Э</text>
<text x="977" y="277" class="tf" text-anchor="middle">Э</text>
<text x="1002" y="244" class="tf" style="font-size:8px" text-anchor="middle">s</text>
<text x="1171.5" y="151" class="bt" textLength="56.5" lengthAdjust="spacing">Бенетнаш</text>
<rect x="953" y="125" width="15" height="4" fill="#f01818"/>
<rect x="953" y="130" width="15" height="4" fill="#00a020"/>
<rect x="959" y="143" width="9" height="4" fill="#00a020"/>
<rect x="944" y="148" width="24" height="4" fill="#00a020"/>
<rect x="953" y="161" width="15" height="4" fill="#f01818"/>
<rect x="932" y="166" width="36" height="4" fill="#00a020"/>
<rect x="953" y="179" width="15" height="4" fill="#f01818"/>
<rect x="929" y="184" width="39" height="4" fill="#00a020"/>
<rect x="953" y="197" width="15" height="4" fill="#f01818"/>
<rect x="962" y="202" width="6" height="4" fill="#00a020"/>
<rect x="953" y="215" width="15" height="4" fill="#00a020"/>
<rect x="947" y="220" width="21" height="4" fill="#00a020"/>
<rect x="953" y="233" width="15" height="4" fill="#00a020"/>
<rect x="923" y="238" width="45" height="4" fill="#00a020"/>
<text x="1096.0" y="404.5" class="tg" fill="#000">♃︎</text>
<text x="1112.0" y="404.5" class="tg" fill="#000">☋︎</text>
<g fill="none" stroke="#000" stroke-width="1"><circle cx="1128.5" cy="397.3" r="1.7"/><path d="M1124.5 396.8 A4.0 4.0 0 0 0 1132.5 396.8"/><path d="M1128.5 400.8 V405.8 M1126.0 403.6 H1131.0"/></g>
<text x="1144" y="404.5" class="bt" textLength="73.7" lengthAdjust="spacing">Тау-квадрат</text>
<text x="1024.2" y="440.0" class="tg" fill="#000">♀︎</text>
<text x="1036" y="440" class="tt" text-anchor="middle">=</text>
<text x="1049.6" y="440.0" class="tg" fill="#000">♄︎</text>
<text x="1062" y="440" class="tt" text-anchor="middle">=</text>
<text x="1075.0" y="440.0" class="tg" fill="#000">♆︎</text>
<text x="1090.0" y="440.0" class="tg" fill="#000">♂︎</text>
<text x="1103" y="440" class="tt" text-anchor="middle">=</text>
<text x="1116.3" y="440.0" class="tg" fill="#000">♃︎</text>
<text x="1128.5" y="440" class="tt" text-anchor="middle">=</text>
<text x="1140.3" y="440.0" class="tg" fill="#000">⛢︎</text>
<text x="1157.0" y="440.0" class="tg" fill="#000">♃︎</text>
<text x="1169" y="440" class="tt" text-anchor="middle">=</text>
<text x="1181.0" y="440.0" class="tg" fill="#000">⛢︎</text>
<text x="1193.8" y="440" class="tt" text-anchor="middle">=</text>
<g fill="none" stroke="#000" stroke-width="1"><circle cx="1206.8" cy="432.8" r="1.7"/><path d="M1202.8 432.3 A4.0 4.0 0 0 0 1210.8 432.3"/><path d="M1206.8 436.3 V441.3 M1204.3 439.1 H1209.3"/></g>
<text x="1219.0" y="440.0" class="tg" fill="#000">⛢︎</text>
<text x="1234.6" y="440" class="tt" text-anchor="middle">=</text>
<text x="1248.0" y="440.0" class="tg" fill="#000">♆︎</text>
<text x="1131.3" y="494" class="bt" textLength="132.4" lengthAdjust="spacing">Цепочки по владению</text>
<text x="1135" y="573" class="bt" textLength="128.7" lengthAdjust="spacing">Цепочки по изгнанию</text>
<text x="1184.0" y="508.4" class="tg" fill="#ff0000" stroke="#f00" stroke-width="0.35" style="font-size:14.2px">☉︎</text>
<text x="1199.5" y="508" class="ar" text-anchor="middle">→</text>
<text x="1215.0" y="508.0" class="tg" fill="#000">⛢︎</text>
<text x="1230.5" y="508" class="ar" text-anchor="middle">↔</text>
<text x="1248.0" y="508.0" class="tg" fill="#000">♆︎</text>
<text x="1040.0" y="524.0" class="tg" fill="#ff0000" stroke="#f00" stroke-width="0.35">☽︎</text>
<text x="1056" y="524" class="ar" text-anchor="middle">→</text>
<text x="1072.0" y="524.0" class="tg" fill="#000">☿︎</text>
<text x="1088" y="524" class="ar" text-anchor="middle">→</text>
<text x="1104.0" y="524.0" class="tg" fill="#000">♄︎</text>
<text x="1120" y="524" class="ar" text-anchor="middle">→</text>
<text x="1136.0" y="524.0" class="tg" fill="#000">♀︎</text>
<text x="1152" y="524" class="ar" text-anchor="middle">→</text>
<text x="1168.0" y="524.0" class="tg" fill="#000">♃︎</text>
<text x="1184" y="524" class="ar" text-anchor="middle">→</text>
<text x="1200.0" y="524.0" class="tg" fill="#000">♂︎</text>
<g fill="none" stroke="#000" stroke-width="1"><circle cx="1088.0" cy="531.8" r="1.7"/><path d="M1084.0 531.3 A4.0 4.0 0 0 0 1092.0 531.3"/><path d="M1088.0 535.3 V540.3 M1085.5 538.0 H1090.5"/></g>
<text x="1088.0" y="587.5" class="tg" fill="#000">♃︎</text>
<text x="1104" y="587.5" class="ar" text-anchor="middle">→</text>
<text x="1120.0" y="587.5" class="tg" fill="#000">♀︎</text>
<text x="1136" y="587.5" class="ar" text-anchor="middle">→</text>
<text x="1152.0" y="587.5" class="tg" fill="#000">☿︎</text>
<text x="1168" y="587.5" class="ar" text-anchor="middle">→</text>
<text x="1184.0" y="587.5" class="tg" fill="#ff0000" stroke="#f00" stroke-width="0.35">☽︎</text>
<text x="1200" y="587.5" class="ar" text-anchor="middle">→</text>
<text x="1216.0" y="587.5" class="tg" fill="#000">♆︎</text>
<text x="1231" y="587.5" class="ar" text-anchor="middle">→</text>
<text x="1248.0" y="587.9" class="tg" fill="#ff0000" stroke="#f00" stroke-width="0.35" style="font-size:14.2px">☉︎</text>
<text x="1200.0" y="603.0" class="tg" fill="#000">♄︎</text>
<text x="1216" y="603" class="ar" text-anchor="middle">→</text>
<text x="1231.0" y="603.0" class="tg" fill="#000">♂︎</text>
<text x="1135.5" y="618.5" class="tg" fill="#000">⛢︎</text>
<g fill="none" stroke="#000" stroke-width="1"><circle cx="1168.5" cy="627.3" r="1.7"/><path d="M1164.5 626.8 A4.0 4.0 0 0 0 1172.5 626.8"/><path d="M1168.5 630.8 V635.8 M1166.0 633.5 H1171.0"/></g>
<path d="M1208.5 523 H1214.5 V514 M1211.0 517.5 L1214.5 513.5 L1218.0 517.5" fill="none" stroke="#000" stroke-width="1"/>
<path d="M1097 538 H1103 V529 M1099.5 532.5 L1103 528.5 L1106.5 532.5" fill="none" stroke="#000" stroke-width="1"/>
<path d="M1241 602 H1247 V593 M1243.5 596.5 L1247 592.5 L1250.5 596.5" fill="none" stroke="#000" stroke-width="1"/>
<path d="M1144.5 614.5 H1152.5 V592 M1149 596 L1152.5 591.5 L1156 596" fill="none" stroke="#000" stroke-width="1"/>
<path d="M1177.5 630.5 H1184.5 V592 M1181 596 L1184.5 591.5 L1188 596" fill="none" stroke="#000" stroke-width="1"/>
<path d="M1089.5 902.5 H1097.5 L1100.0 912.5 H1087.0 Z" fill="none" stroke="#000" stroke-width="1"/>
<rect x="1093.0" y="907.0" width="1" height="1" fill="#000"/>
<rect x="1087.0" y="938.5" width="13" height="10" fill="none" stroke="#000" stroke-width="1"/>
<rect x="1093.0" y="943.0" width="1" height="1" fill="#000"/>
<path d="M1110.5 902.5 H1118.5 L1121.0 912.5 H1108.0 Z" fill="none" stroke="#000" stroke-width="1"/>
<path d="M1114.5 902.5 V912.5 M1109.3 907.5 H1119.7" fill="none" stroke="#000" stroke-width="1"/>
<rect x="1108.0" y="938.5" width="13" height="10" fill="none" stroke="#000" stroke-width="1"/>
<path d="M1114.5 938.5 V948.5 M1108.0 943.5 H1121.0" fill="none" stroke="#000" stroke-width="1"/>
<path d="M1131.5 902.5 H1139.5 L1142.0 912.5 H1129.0 Z" fill="none" stroke="#000" stroke-width="1"/>
<path d="M1135.5 902.5 L1140.7 907.5 L1135.5 912.5 L1130.3 907.5 Z" fill="none" stroke="#000" stroke-width="1"/>
<rect x="1129.0" y="938.5" width="13" height="10" fill="none" stroke="#000" stroke-width="1"/>
<path d="M1135.5 938.5 L1142.0 943.5 L1135.5 948.5 L1129.0 943.5 Z" fill="none" stroke="#000" stroke-width="1"/>
<circle cx="1178" cy="907.0" r="6.5" fill="none" stroke="#000" stroke-width="1"/>
<path d="M1173 907.0 H1183 A5 5 0 0 0 1173 907.0 Z" fill="none" stroke="#000" stroke-width="1"/>
<path d="M1178 938.5 L1183.5 948.0 H1172.5 Z" fill="none" stroke="#000" stroke-width="1"/>
<circle cx="1198.5" cy="907.0" r="6.5" fill="none" stroke="#000" stroke-width="1"/>
<path d="M1193.5 908.0 H1203.5 A5 5 0 0 1 1193.5 908.0 Z" fill="none" stroke="#000" stroke-width="1"/>
<path d="M1198.5 948.5 L1204.0 939.0 H1193.0 Z" fill="none" stroke="#000" stroke-width="1"/>
<circle cx="1219.5" cy="907.0" r="6.5" fill="none" stroke="#000" stroke-width="1"/>
<path d="M1220.5 902.0 V912.0 A5 5 0 0 1 1220.5 902.0 Z" fill="none" stroke="#000" stroke-width="1"/>
<path d="M1219.5 938.5 L1225.0 948.0 H1214.0 Z" fill="none" stroke="#000" stroke-width="1"/>
<path d="M1215.5 945.0 H1223.5" fill="none" stroke="#000" stroke-width="1"/>
<circle cx="1240.5" cy="907.0" r="6.5" fill="none" stroke="#000" stroke-width="1"/>
<path d="M1239.5 902.0 V912.0 A5 5 0 0 0 1239.5 902.0 Z" fill="none" stroke="#000" stroke-width="1"/>
<path d="M1240.5 948.5 L1246.0 939.0 H1235.0 Z" fill="none" stroke="#000" stroke-width="1"/>
<path d="M1236.5 942.0 H1244.5" fill="none" stroke="#000" stroke-width="1"/>
<text x="1093.5" y="928.5" class="tt" text-anchor="middle">1</text>
<text x="1114.5" y="928.5" class="tt" text-anchor="middle">8</text>
<text x="1135.5" y="928.5" class="tt" text-anchor="middle">1</text>
<text x="1093.5" y="964.5" class="tt" text-anchor="middle">4</text>
<text x="1114.5" y="964.5" class="tt" text-anchor="middle">3</text>
<text x="1135.5" y="964.5" class="tt" text-anchor="middle">3</text>
<text x="1178" y="928.5" class="tt" text-anchor="middle">2</text>
<text x="1198.5" y="928.5" class="tt" text-anchor="middle">8</text>
<text x="1219.5" y="928.5" class="tt" text-anchor="middle">2</text>
<text x="1240.5" y="928.5" class="tt" text-anchor="middle">8</text>
<text x="1178" y="964.5" class="tt" text-anchor="middle">2</text>
<text x="1198.5" y="964.5" class="tt" text-anchor="middle">3</text>
<text x="1219.5" y="964.5" class="tt" text-anchor="middle">4</text>
<text x="1240.5" y="964.5" class="tt" text-anchor="middle">1</text></svg>
<svg class="abs" style="left:0;top:0" width="1280" height="994" viewBox="0 0 1280 994"><text x="8.3" y="104" class="bt" textLength="289" lengthAdjust="spacing">23 января 2011  Вс  19:18:41 (GMT) 51n30  0w10</text>
<text x="8.3" y="117" class="bt" textLength="91.7" lengthAdjust="spacing">Лондон, Англия</text>
<text x="8.5" y="136" class="sm" textLength="65" lengthAdjust="spacing">Тропический</text>
<text x="8.5" y="149" class="sm" textLength="84" lengthAdjust="spacing">Эклиптикальная</text>
<text x="8.5" y="162" class="sm" textLength="88" lengthAdjust="spacing">Геоцентрическая</text>
<text x="8.5" y="175" class="sm" textLength="49.6" lengthAdjust="spacing">Плацидус</text>
<text x="9.4" y="194.4" style="font:14.6px 'DejaVu Sans',sans-serif" fill="#f00"  stroke="#f00" stroke-width="0.3">☉︎</text>
<text x="32.5" y="194" class="bt" >9</text>
<text x="7.5" y="212.4" style="font:15.2px 'DejaVu Sans',sans-serif" fill="#f00"  stroke="#f00" stroke-width="0.3">☽︎</text>
<text x="32.7" y="212" class="bt" textLength="37.8" lengthAdjust="spacing">19 XVI</text>
<text x="75.0" y="213.9" style="font:17.9px 'DejaVu Sans',sans-serif" fill="#000" >♓︎</text>
<text x="8.7" y="230" class="bt" textLength="38.7" lengthAdjust="spacing">Час НЗ</text>
<text x="54.0" y="230.1" style="font:13.9px 'DejaVu Sans',sans-serif" fill="#f00"  stroke="#f00" stroke-width="0.3">☉︎</text>
<rect x="72.5" y="221.5" width="7" height="7" fill="none" stroke="#000" stroke-width="1"/>
<text x="8.2" y="248" class="bt" textLength="28.2" lengthAdjust="spacing">День</text>
<text x="42.9" y="248.1" style="font:13.8px 'DejaVu Sans',sans-serif" fill="#f00"  stroke="#f00" stroke-width="0.3">☉︎</text>
<text x="8.7" y="266" class="bt" textLength="19" lengthAdjust="spacing">Год</text>
<text x="35.0" y="266.3" style="font:13.9px 'DejaVu Sans',sans-serif" fill="#f00"  stroke="#f00" stroke-width="0.3">☉︎</text>
<text x="8.6" y="893.7" class="bt" textLength="54.7" lengthAdjust="spacing">Возничий</text>
<text x="75.1" y="894.0" style="font:12.6px 'DejaVu Sans',sans-serif" fill="#000" >♂︎</text>
<text x="8.2" y="911.7" class="bt" textLength="65" lengthAdjust="spacing">Дорифорий</text>
<text x="84.8" y="911.4" style="font:15.0px 'DejaVu Sans',sans-serif" fill="#000" >☿︎</text>
<text x="8.6" y="929.7" class="bt" textLength="93" lengthAdjust="spacing">Альмутен карты</text>
<text x="113.0" y="929.5" style="font:15.1px 'DejaVu Sans',sans-serif" fill="#000" >☿︎</text>
<text x="8.5" y="947.6" class="bt" textLength="479" lengthAdjust="spacing">Частное Солнечное затмение 4 января 2011 Вт  8:50:40 13°38'46"Cap (-19 дней)</text>
<text x="8.5" y="965.6" class="bt" textLength="338" lengthAdjust="spacing"><tspan font-weight="bold">Минимум Алголя:</tspan> 21.01.2011  0:36,  <tspan font-weight="bold">23.01.2011 21:24</tspan></text></svg>
<div id="tip">Секстиль Венера-Сатурн &lt;60° 0'&gt;</div>
<div id="dlg"><div class="ttl"><svg class="abs" style="left:5px;top:7px" width="17" height="17" viewBox="0 0 18 18"><circle cx="9" cy="9" r="8.5" fill="#1c3c88"/><circle cx="8" cy="8" r="7" fill="#3e6cc8"/><circle cx="6" cy="5.5" r="3" fill="#a8c8f8"/><path d="M5 6H14L6 14H14" fill="none" stroke="#fff" stroke-width="2.2"/></svg><b>Исходные данные</b><div class="abs" style="left:394px;top:6px;width:20px;height:20px;box-sizing:border-box;border:1px solid #fff;border-radius:3px;background:linear-gradient(135deg,#e08868,#c04c30)"><svg width="18" height="18"><path d="M4.5 4.5L13.5 13.5M13.5 4.5L4.5 13.5" stroke="#fff" stroke-width="2.2"/></svg></div></div>
<div class="body">
<div class="inp" style="left:31px;top:31px;width:332px;height:23px;"></div>
<div class="inp" style="left:368px;top:31px;width:38px;height:23px;">-</div>
<div class="inp" style="left:31px;top:57px;width:125px;height:24px;">23.01.2011</div>
<div class="inp" style="left:158px;top:57px;width:125px;height:24px;">19:18:41</div>
<div class="inp" style="left:285px;top:57px;width:90px;height:24px;">+00:00:00</div>
<div class="inp" style="left:31px;top:85px;width:345px;height:23px;">Лондон, Англия</div>
<div class="inp" style="left:31px;top:111px;width:135px;height:24px;">51°30'00"N</div>
<div class="inp" style="left:168px;top:111px;width:142px;height:24px;padding-left:18.5px">0°10'00"W</div>
<div class="inp" style="left:314px;top:111px;width:47px;height:24px;"></div>
<div class="abs" style="left:382px;top:60px;width:18px;height:19px;background:#ffff00"></div>
<div class="abs" style="left:388px;top:33px;width:16px;height:19px;background:linear-gradient(#dbe6f6,#b4c8e8);border:1px solid #b0c0dc;box-sizing:border-box"><svg width="14" height="17"><path d="M3.5 6.5L7 10L10.5 6.5" fill="none" stroke="#404858" stroke-width="2"/></svg></div>
<div class="abs" style="left:359px;top:87px;width:16px;height:19px;background:linear-gradient(#dbe6f6,#b4c8e8);border:1px solid #b0c0dc;box-sizing:border-box"><svg width="14" height="17"><path d="M3.5 6.5L7 10L10.5 6.5" fill="none" stroke="#404858" stroke-width="2"/></svg></div>
<div class="abs" style="left:365px;top:111px;width:45px;height:23px;background:#dfe9f8"><svg width="45" height="23"><path d="M14 8L11 11.5L14 15zM31 8L34 11.5L31 15z" fill="#a8c4ec"/></svg></div>
<div class="abs" style="left:311px;top:140px;width:97px;height:26px;box-sizing:border-box;background:#efefef;border:1px solid #fff;border-right-color:#606060;border-bottom-color:#606060;box-shadow:inset -1px -1px 0 #a0a0a0"><svg class="abs" style="left:7px;top:3px" width="12" height="18"><path d="M1 1L10 9L1 17Z" fill="#008000"/></svg><span class="abs" style="left:23px;top:5px;font:11px 'DejaVu Sans Condensed','Liberation Sans',sans-serif">Выполнить</span></div>
<svg class="abs" style="left:0;top:0" width="413" height="171"><g transform="translate(9,8)" shape-rendering="crispEdges"><path d="M1.5 1.5h6v8h-6z" fill="#fff" stroke="#000"/><path d="M6.5 5.5h7v9h-7z" fill="#fff" stroke="#000080"/><path d="M3 4h3M3 6h3M8 8h4M8 10h4M8 12h4" stroke="#000"/></g><g transform="translate(36,7)" shape-rendering="crispEdges"><path d="M1.5 3.5h11v12h-11z" fill="#808020" stroke="#000"/><path d="M4.5 1.5h5v3h-5z" fill="#c0c0c0" stroke="#000"/><path d="M7.5 8.5h8v7h-8z" fill="#fff" stroke="#000080"/><path d="M9 11h5M9 13h5" stroke="#000"/></g><g transform="translate(65,8)" shape-rendering="crispEdges"><path d="M1.5 0.5h7l3 3v11h-10z" fill="#fff" stroke="#000"/></g><g transform="translate(92,8)" shape-rendering="crispEdges"><rect x="0.5" y="0.5" width="14" height="14" fill="#808000" stroke="#000"/><rect x="3" y="1" width="9" height="6" fill="#fff"/><rect x="4" y="10" width="7" height="4" fill="#000"/><rect x="8" y="11" width="2" height="3" fill="#fff"/></g><g transform="translate(119,7)" shape-rendering="crispEdges"><rect x="0" y="1" width="16" height="2" fill="#000080"/><path d="M0 4.5h16" stroke="#000080"/><path d="M2 7h2M5 7h2M9 7h2M12 7h2M2 10h2M9 10h2M2 13h2M5 13h2M9 13h2" stroke="#c8c8c8" stroke-width="2"/><path d="M5 10h2M12 13h2" stroke="#f00" stroke-width="2"/></g><g transform="translate(148,7)" shape-rendering="crispEdges"><rect x="0.5" y="0.5" width="16" height="16" fill="#fff" stroke="#000"/><text x="8.5" y="14" text-anchor="middle" style="font:bold 15px 'Liberation Serif',serif" shape-rendering="auto">K</text></g><g transform="translate(176,7)" shape-rendering="crispEdges"><rect x="0" y="0" width="17" height="17" fill="#ffff00"/><text x="8.5" y="13.5" text-anchor="middle" style="font:italic bold 14px 'Liberation Serif',serif" shape-rendering="auto">H</text></g><g transform="translate(204,7)" shape-rendering="crispEdges"><path d="M1 2L7 9V15L1 8Z" fill="#0000c0" stroke="#000" shape-rendering="auto"/><path d="M7 9L14 4L15 9L8 15Z" fill="#fff" stroke="#000" shape-rendering="auto"/><path d="M9 1l4 2" stroke="#000080" stroke-width="2" shape-rendering="auto"/></g><g transform="translate(253,8)" shape-rendering="crispEdges"><path d="M2 6A5 4 0 0 1 12 4M12 9A5 4 0 0 1 2 11M1 7.5H14" fill="none" stroke="#000" stroke-width="1.5" shape-rendering="auto"/></g><g transform="translate(276,3)" shape-rendering="crispEdges"><rect x="0" y="0" width="22" height="22" fill="#f8f8f8" stroke="#d0d0d0"/><circle cx="11" cy="11" r="4" fill="none" stroke="#000" shape-rendering="auto"/><circle cx="11" cy="11" r="6" fill="none" stroke="#888" stroke-dasharray="1 1.5" shape-rendering="auto"/></g><g transform="translate(304,8)" shape-rendering="crispEdges"><circle cx="7" cy="7" r="6" fill="none" stroke="#000" shape-rendering="auto"/><circle cx="7" cy="7" r="4.5" fill="none" stroke="#888" stroke-dasharray="1 1" shape-rendering="auto"/></g><g transform="translate(358,7)" shape-rendering="crispEdges"><rect x="0" y="0" width="16" height="16" rx="2" fill="#0000f0"/><path d="M4 4H12L4 12H12" fill="none" stroke="#00e8f8" stroke-width="2" shape-rendering="auto"/></g><g transform="translate(8,34)" shape-rendering="crispEdges"><path d="M1.5 1.5h8v11h-8z" fill="#fff" stroke="#000"/><path d="M3 4h5M3 6h5M3 8h3" stroke="#000"/><circle cx="11" cy="10" r="4.5" fill="#888" stroke="#222" shape-rendering="auto"/></g><g transform="translate(8,60)" shape-rendering="crispEdges"><rect x="0.5" y="0.5" width="14" height="14" fill="#fff" stroke="#e00000"/><path d="M7.5 8V4M7.5 8L5 6" stroke="#e00000" shape-rendering="auto"/><path d="M7 2h1M7 12h1M2 7h1M12 7h1" stroke="#000"/></g><g transform="translate(7,87)" shape-rendering="crispEdges"><rect x="0.5" y="0.5" width="15" height="15" fill="#20e0e0" stroke="#000"/><circle cx="11.5" cy="4.5" r="2.5" fill="#e00000" shape-rendering="auto"/><path d="M10 6L4 12M4 8V12H8" stroke="#e00000" fill="none" shape-rendering="auto"/></g><g transform="translate(8,114)" shape-rendering="crispEdges"><rect x="0.5" y="0.5" width="14" height="14" fill="#fff" stroke="#000"/><path d="M8.5 3V12M4 8.5H12" stroke="#008000" stroke-width="1"/></g><g transform="translate(6,142)" shape-rendering="crispEdges"><rect x="0.5" y="0.5" width="15" height="15" fill="#fff" stroke="#000"/><circle cx="8" cy="8" r="6" fill="none" stroke="#2020e0" stroke-width="1.5" shape-rendering="auto"/><circle cx="8" cy="8" r="3" fill="none" stroke="#e020e0" shape-rendering="auto"/></g><g transform="translate(383,87)" shape-rendering="crispEdges"><rect x="0.5" y="0.5" width="15" height="15" fill="#208040" stroke="#000"/><path d="M1 15L15 1V15Z" fill="#60e0e0"/><circle cx="9" cy="10" r="2.5" fill="#fff" stroke="#e00000" shape-rendering="auto"/></g></svg>
</div></div>
<div id="status"><span style="left:2.3px">RUSSIAN</span><span style="left:85px">II Натал</span><span style="left:164px">Секстиль Венера-Сатурн &lt;60° 0'&gt;</span><i style="left:78px;opacity:.5"></i><i style="left:158px;opacity:.5"></i><i style="left:894px"></i><i style="left:934px"></i><i style="left:1052px"></i><i style="left:1150px"></i><div class="abs" style="left:900px;top:5px;width:15px;height:14px;background:#ffff00"></div><span style="left:1156px;letter-spacing:0.2px">UT: 2011.01.22 20:48:50</span><i style="left:1277px"></i></div>
</body></html>
